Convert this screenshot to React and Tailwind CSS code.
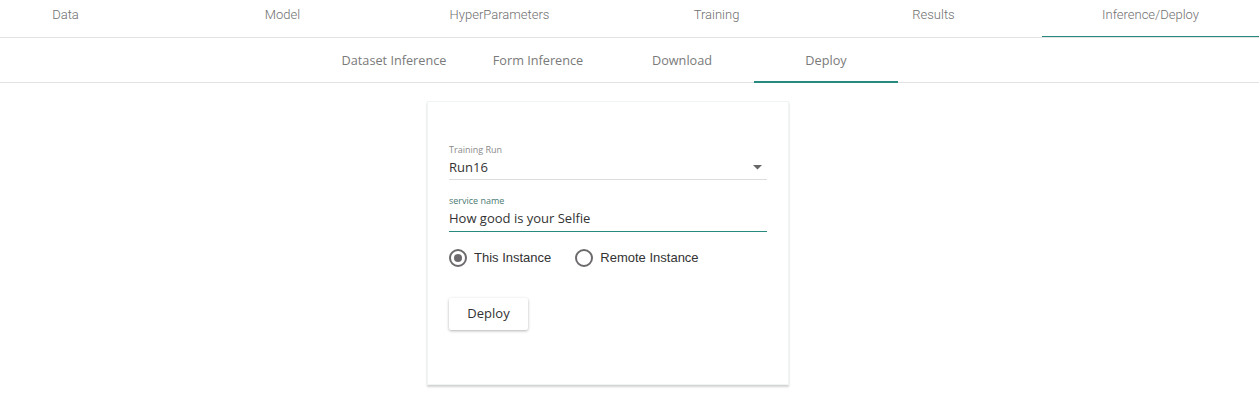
import { useState } from 'react';

const mainTabs = ['Data', 'Model', 'HyperParameters', 'Training', 'Results', 'Inference/Deploy'];
const subTabs = ['Dataset Inference', 'Form Inference', 'Download', 'Deploy'];

export default function App() {
  const [mode, setMode] = useState('this');
  const [name, setName] = useState('How good is your Selfie');

  return (
    <div className="w-full min-h-[411px] bg-white font-['Open_Sans',sans-serif]">
      <div className="flex justify-end overflow-hidden border-b border-[#e3e3e3] h-[38px]">
        {mainTabs.map((t) => (
          <div
            key={t}
            className="relative w-[217px] shrink-0 flex justify-center pt-[5px] text-[13px] text-[#6f6f6f] font-['Roboto',sans-serif] font-light"
          >
            {t}
            {t === 'Inference/Deploy' && (
              <span className="absolute left-0 right-0 bottom-[-1px] h-[2px] bg-[#268a7e]" />
            )}
          </div>
        ))}
      </div>

      <div className="flex pl-[322px] h-[45px] border-b border-[#e3e3e3]">
        {subTabs.map((t) => (
          <div key={t} className="relative w-[144px] shrink-0 flex justify-center pt-[13px] text-[12.7px] text-[#7a7a7a]">
            {t}
            {t === 'Deploy' && (
              <span className="absolute left-0 right-0 bottom-[-1px] h-[2px] bg-[#268a7e]" />
            )}
          </div>
        ))}
      </div>

      <div className="pl-[427px] pt-[18px]">
        <div className="w-[362px] h-[284px] bg-white border border-[#f1f4f4] shadow-[0_2px_2px_rgba(0,0,0,0.18)] px-[21px] pt-[42px]">
          <div className="w-[318px]">
            <div className="text-[9px] text-[#8a8a8a] leading-[12px]">Training Run</div>
            <div className="flex items-center justify-between border-b border-[#dcdcdc] h-[24px]">
              <span className="text-[13px] text-[#333]">Run16</span>
              <svg width="9" height="5" viewBox="0 0 9 5" className="mr-[5px]">
                <path d="M0 0 L9 0 L4.5 4.5 Z" fill="#666" />
              </svg>
            </div>

            <div className="mt-[15px] text-[9px] text-[#4a7a72] leading-[12px]">service name</div>
            <div className="border-b border-[#268a7e] h-[25px] flex items-center">
              <input
                value={name}
                onChange={(e) => setName(e.target.value)}
                className="w-full outline-none text-[13px] text-[#333] bg-transparent"
              />
            </div>
          </div>

          <div className="flex items-center gap-[24px] mt-[16px] font-['Liberation_Sans',Arial,sans-serif] text-[13px] text-[#333]">
            {[
              ['this', 'This Instance'],
              ['remote', 'Remote Instance'],
            ].map(([k, label]) => (
              <label key={k} className="flex items-center gap-[7px] cursor-pointer" onClick={() => setMode(k)}>
                <span className="w-[18px] h-[18px] rounded-full border-2 border-[#6d6a6d] flex items-center justify-center">
                  {mode === k && <span className="w-[8px] h-[8px] rounded-full bg-[#6d6a6d]" />}
                </span>
                {label}
              </label>
            ))}
          </div>

          <button className="mt-[30px] w-[79px] h-[32px] bg-white rounded-[2px] shadow-[0_1px_3px_rgba(0,0,0,0.3)] text-[13px] text-[#333]">
            Deploy
          </button>
        </div>
      </div>
    </div>
  );
}
